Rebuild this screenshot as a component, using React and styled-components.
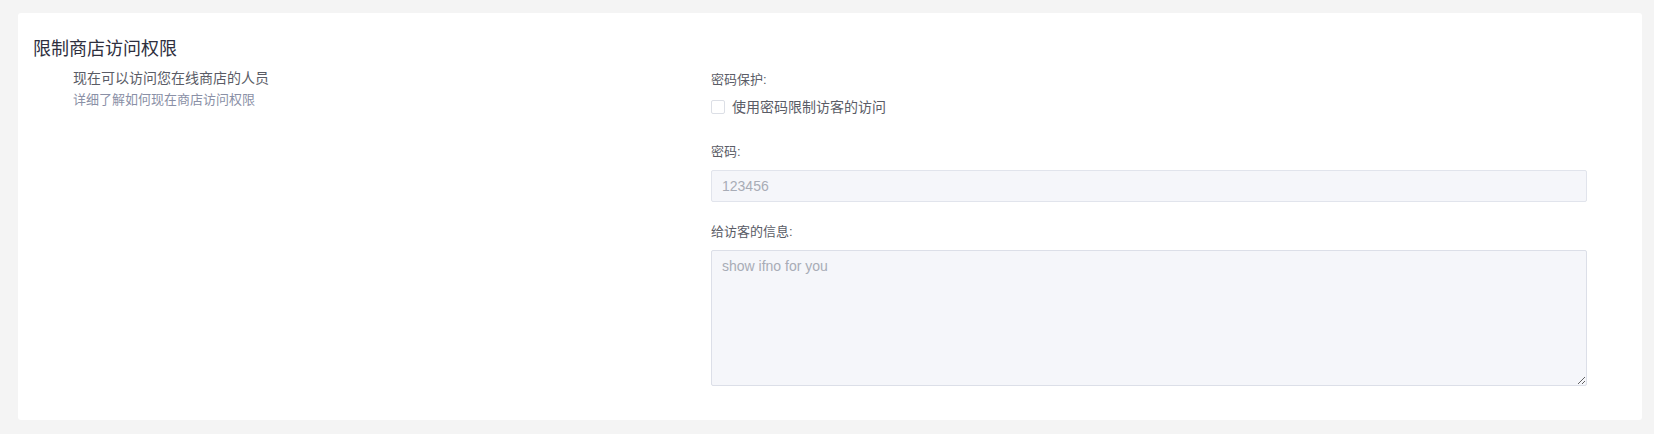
import React from 'react';
import styled, { createGlobalStyle } from 'styled-components';

const GlobalStyle = createGlobalStyle`
  html, body {
    margin: 0;
    padding: 0;
    background: #f4f4f4;
    font-family: "Liberation Sans", "Noto Sans CJK SC", sans-serif;
  }
  * { box-sizing: border-box; }
`;

const Page = styled.div`
  padding: 13px 12px 14px 18px;
`;

const Card = styled.section`
  background: #ffffff;
  border-radius: 3px;
  padding: 24px 55px 34px 15px;
  display: flex;
`;

const Intro = styled.div`
  width: 678px;
  flex-shrink: 0;
`;

const Title = styled.h2`
  margin: 0;
  font-size: 18px;
  line-height: 24px;
  font-weight: 400;
  color: #2e2f3e;
`;

const IntroText = styled.p`
  margin: 0;
  padding-left: 40px;
  font-size: ${(p) => (p.$muted ? 13 : 14)}px;
  line-height: 22px;
  color: ${(p) => (p.$muted ? '#8a90a6' : '#5a5c66')};
  &:first-of-type {
    margin-top: 6px;
  }
`;

const Form = styled.div`
  flex: 1;
  padding-top: 33px;
  display: flex;
  flex-direction: column;
`;

const Field = styled.div`
  display: flex;
  flex-direction: column;
  margin-bottom: ${(p) => p.$gap || 0}px;
`;

const Label = styled.label`
  font-size: 13px;
  line-height: 20px;
  color: #5a5c66;
  margin-bottom: ${(p) => p.$gap || 0}px;
`;

const CheckRow = styled.label`
  display: flex;
  align-items: center;
  gap: 7px;
  font-size: 14px;
  line-height: 20px;
  color: #5a5c66;
  cursor: pointer;
`;

const Box = styled.span`
  width: 14px;
  height: 14px;
  border: 1px solid #dcdfe6;
  border-radius: 2px;
  background: #fff;
  display: inline-block;
`;

const Input = styled.input`
  height: 32px;
  width: 100%;
  padding: 0 10px;
  border: 1px solid #e1e4ec;
  border-radius: 2px;
  background: #f5f6fa;
  font-family: inherit;
  font-size: 14px;
  color: #5a5c66;
  outline: none;
  &::placeholder { color: #a8acb6; }
`;

const TextArea = styled.textarea`
  display: block;
  height: 136px;
  width: 100%;
  padding: 5px 10px;
  border: 1px solid #dcdfe8;
  border-radius: 2px;
  background: #f5f6fa;
  font-family: inherit;
  font-size: 14px;
  line-height: 20px;
  color: #5a5c66;
  outline: none;
  &::placeholder { color: #a8acb6; }
`;

export default function App() {
  return (
    <Page>
      <GlobalStyle />
      <Card>
        <Intro>
          <Title>限制商店访问权限</Title>
          <IntroText>现在可以访问您在线商店的人员</IntroText>
          <IntroText $muted>详细了解如何现在商店访问权限</IntroText>
        </Intro>
        <Form>
          <Field $gap={25}>
            <Label $gap={7}>密码保护:</Label>
            <CheckRow>
              <Box />
              使用密码限制访客的访问
            </CheckRow>
          </Field>
          <Field $gap={20}>
            <Label $gap={8}>密码:</Label>
            <Input placeholder="123456" />
          </Field>
          <Field>
            <Label $gap={8}>给访客的信息:</Label>
            <TextArea placeholder="show ifno for you" />
          </Field>
        </Form>
      </Card>
    </Page>
  );
}
